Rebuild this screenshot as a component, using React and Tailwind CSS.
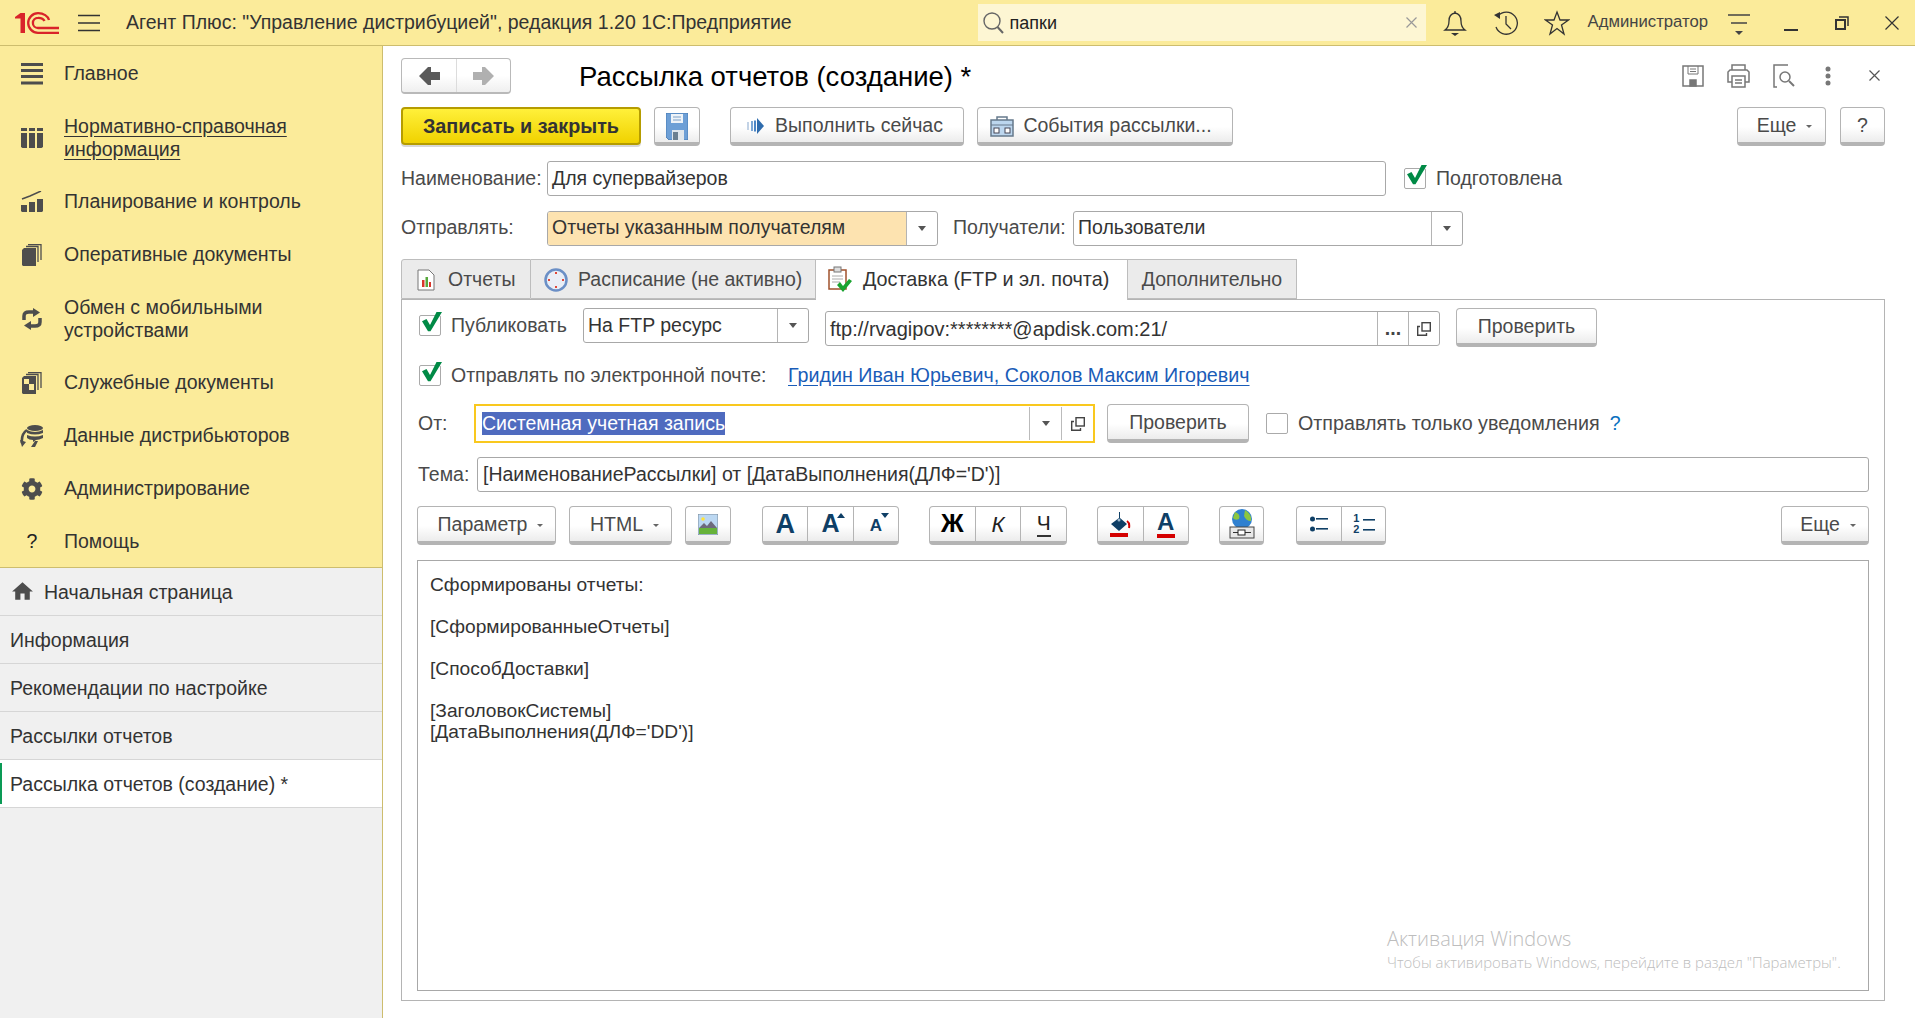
import React from "react";
import { MdHome } from "react-icons/md";
import { FaCog } from "react-icons/fa";

const font = "font-['Liberation_Sans',Arial,sans-serif]";

// ---- small drawn icons ----
const Logo = () => (
  <svg width="46" height="22" viewBox="0 0 46 22" fill="none" stroke="#d9232a" className="ml-[14px] shrink-0">
    <path d="M1 5L6.500 1H11V21H6.500V6.500H1Z" fill="#d9232a" stroke="none" />
    <path d="M35 8A11 8 0 0 0 24 1.200A9.800 9.800 0 0 0 24 20.800H45" strokeWidth="2.300" />
    <path d="M30.500 9A6.500 4.500 0 0 0 24 5.800A5 5 0 0 0 24 16H45" strokeWidth="2.300" />
  </svg>
);

const Burger = () => (
  <svg width="22" height="18" viewBox="0 0 22 18" stroke="#333" strokeWidth="1.3">
    <path d="M0 1.5H22M0 9H22M0 16.5H22" />
  </svg>
);

const SideIcon = ({ name }) => {
  const c = "#4d4d4d";
  if (name === "main")
    return (
      <svg width="22" height="22" viewBox="0 0 22 22" fill={c}>
        <rect y="0" width="22" height="3" /><rect y="6" width="22" height="3" /><rect y="12" width="22" height="3" /><rect y="18.5" width="22" height="3" />
      </svg>
    );
  if (name === "nsi")
    return (
      <svg width="22" height="22" viewBox="0 0 22 22" fill={c}>
        <path d="M0 1H6V4H0ZM8 1H14V4H8ZM16 1H22V4H16Z" />
        <path d="M0 6H6V21H1.500L0 20ZM8 6H14V21H8ZM16 6H22V20L20.500 21H16Z" />
      </svg>
    );
  if (name === "plan")
    return (
      <svg width="22" height="22" viewBox="0 0 22 22" fill={c}>
        <path d="M1 8L9 5L20 0" stroke={c} strokeWidth="1.500" fill="none" />
        <path d="M0 14H6V21H1L0 20ZM8 11H14V21H8ZM16 8H22V20L21 21H16Z" />
      </svg>
    );
  if (name === "docs")
    return (
      <svg width="20" height="22" viewBox="0 0 20 22" fill={c}>
        <path d="M0 6L2 4H14V22H1L0 21Z" />
        <path d="M4 2.500H16V18M6 .7H19V16" stroke={c} fill="none" strokeWidth="1.300" />
      </svg>
    );
  if (name === "sync")
    return (
      <svg width="22" height="22" viewBox="0 0 22 22" fill="none" stroke={c} strokeWidth="3.500">
        <path d="M3 12V8Q3 4 8 4H13" />
        <path d="M19 10V14Q19 18 14 18H9" />
        <path d="M12 0L19 4.500L12 9Z" fill={c} stroke="none" />
        <path d="M10 13L3 17.500L10 22Z" fill={c} stroke="none" />
      </svg>
    );
  if (name === "service")
    return (
      <svg width="20" height="22" viewBox="0 0 20 22" fill={c}>
        <path fillRule="evenodd" d="M0 6L2 4H14V22H1L0 21ZM2 7V12H7V7ZM7 12V18H12V12Z" />
        <path d="M4 2.500H16V18M6 .7H19V16" stroke={c} fill="none" strokeWidth="1.300" />
      </svg>
    );
  if (name === "data")
    return (
      <svg width="24" height="22" viewBox="0 0 24 22" fill={c}>
        <ellipse cx="15" cy="3" rx="8" ry="3" />
        <path d="M7 5Q15 9 23 5V8Q15 11 7 8ZM7 10Q15 13 23 10V13Q19 15 16 15L13 17V15Q9 15 7 13Z" />
        <path d="M7 5Q1 9 2 18" stroke={c} strokeWidth="2.600" fill="none" />
        <path d="M0 15L6 17L2 22ZM11 22L15 16H18L15 22Z" />
      </svg>
    );
  if (name === "admin") return <FaCog size={22} color={c} />;
  return <span className="text-[19.5px] text-[#222]">?</span>;
};

const LeftArrow = ({ color }) => (
  <svg width="21" height="18" viewBox="0 0 21 18" fill={color}><path d="M0 9L9 0H12V5H21V13H12V18H9Z" /></svg>
);
const RightArrow = ({ color }) => (
  <svg width="21" height="18" viewBox="0 0 21 18" fill={color}><path d="M21 9L12 0H9V5H0V13H9V18H12Z" /></svg>
);

const Floppy = () => (
  <svg width="22" height="27" viewBox="0 0 22 27">
    <path d="M0 0H22V27H3L0 24Z" fill="#6d9fd6" stroke="#3f74ad" strokeWidth=".8" />
    <rect x="5" y="1" width="12" height="9" fill="#eef3f8" />
    <path d="M7 4H15M7 7H15" stroke="#7aa0c8" />
    <rect x="6" y="17" width="12" height="10" fill="#dfe6ec" />
    <rect x="7" y="19" width="5" height="8" fill="#6a7f90" />
  </svg>
);

const RunIcon = () => (
  <svg width="17" height="16" viewBox="0 0 17 16">
    <path d="M1 4V12" stroke="#c3d3e6" strokeWidth="2" />
    <path d="M5 3V13" stroke="#7ba7d6" strokeWidth="2" />
    <path d="M8 2.500V13.500" stroke="#4d86c5" strokeWidth="2" />
    <path d="M10 0L17 8L10 16Z" fill="#2f6cad" />
  </svg>
);

const EventsIcon = () => (
  <svg width="24" height="21" viewBox="0 0 24 21">
    <path d="M1 4H23V20H1Z" fill="#bcd6ee" stroke="#66798c" strokeWidth="1.500" />
    <path d="M7 4V1H17V4" fill="none" stroke="#66798c" strokeWidth="1.500" />
    <path d="M1 9H23" stroke="#66798c" />
    <rect x="4" y="12" width="5" height="5" fill="#fff" stroke="#445" strokeWidth="1" />
    <rect x="15" y="12" width="5" height="5" fill="#fff" stroke="#445" strokeWidth="1" />
  </svg>
);

const OpenIcon = () => (
  <svg width="14" height="14" viewBox="0 0 14 14" fill="none" stroke="#444" strokeWidth="1.400">
    <rect x="5" y=".7" width="8.300" height="8.300" />
    <path d="M3 4.500H.7V13.300H9.500V11" />
  </svg>
);

const Caret = ({ size = "md" }) => (
  <span
    className={
      size === "sm"
        ? "inline-block border-x-[3px] border-t-[3px] border-x-transparent border-t-[#666]"
        : "inline-block border-x-[4px] border-t-[5px] border-x-transparent border-t-[#555]"
    }
  />
);

const Check = ({ on }) => (
  <span className="relative block w-[22px] h-[21px] shrink-0 border border-[#aaa] rounded-[2px] bg-white">
    {on && (
      <svg width="20" height="20" viewBox="0 0 20 20" className="absolute left-[2px] top-[-4px]">
        <path d="M0 9.300L4.500 7L8 13L14.500 0H20L8.500 19.300H6Z" fill="#008a46" />
      </svg>
    )}
  </span>
);

// ---- controls ----
const Btn = ({ className = "", seg = false, children }) => (
  <div
    className={
      "h-[39px] shrink-0 flex items-center justify-center border border-[#b4b4b4] border-b-[4px] rounded-[4px] bg-[linear-gradient(#ffffff_55%,#ececec)] text-[#4a4a4a] " +
      (seg ? "" : "pt-[2px] ") +
      className
    }
  >
    {children}
  </div>
);

const Box = ({ className = "", children }) => (
  <div className={"h-[35px] shrink-0 flex items-center border border-[#a8a8a8] rounded-[3px] bg-white text-[#333] " + className}>
    {children}
  </div>
);

const Seg = ({ className = "", children, line = true }) => (
  <div className={"h-full flex items-center justify-center shrink-0 " + (line ? "border-l border-[#b4b4b4] " : "") + className}>
    {children}
  </div>
);

// ---- data ----
const sections = [
  { icon: "main", text: ["Главное"] },
  { icon: "nsi", text: ["Нормативно-справочная", "информация"], link: true },
  { icon: "plan", text: ["Планирование и контроль"] },
  { icon: "docs", text: ["Оперативные документы"] },
  { icon: "sync", text: ["Обмен с мобильными", "устройствами"] },
  { icon: "service", text: ["Служебные документы"] },
  { icon: "data", text: ["Данные дистрибьюторов"] },
  { icon: "admin", text: ["Администрирование"] },
  { icon: "help", text: ["Помощь"] },
];

const openTabs = ["Информация", "Рекомендации по настройке", "Рассылки отчетов"];

export default function App() {
  return (
    <div className={font + " w-[1915px] h-[1018px] flex flex-col overflow-hidden bg-white text-[19.5px] text-[#333]"}>
      {/* Header */}
      <header className="h-[46px] shrink-0 flex items-center bg-[#fbeb9a] border-b border-[#cdbd6e]">
        <Logo />
        <div className="ml-[18px]"><Burger /></div>
        <div className="ml-[26px] text-[#333]">Агент Плюс: "Управление дистрибуцией", редакция 1.20 1С:Предприятие</div>

        <div className="ml-auto w-[448px] h-[37px] flex items-center bg-[#fdf6d3]">
          <svg width="24" height="24" viewBox="0 0 24 24" fill="none" stroke="#666" strokeWidth="1.400" className="ml-[3px]">
            <circle cx="11" cy="10" r="8" /><path d="M16.500 16L22 22" strokeWidth="2" />
          </svg>
          <span className="ml-[5px] mt-[1px] text-[18px] text-[#222]">папки</span>
          <svg width="11" height="11" viewBox="0 0 11 11" stroke="#999" strokeWidth="1.200" className="ml-auto mr-[9px]">
            <path d="M.5.5L10.500 10.500M10.500.5L.5 10.500" />
          </svg>
        </div>

        <svg width="24" height="26" viewBox="0 0 24 26" fill="none" stroke="#333" strokeWidth="1.300" className="ml-[17px]">
          <path d="M2 20Q6 17 6 11Q6 4 12 3Q18 4 18 11Q18 17 22 20Z" /><path d="M12 1V3" /><path d="M8 23H16L12 26Z" fill="#333" stroke="none" />
        </svg>
        <svg width="26" height="26" viewBox="0 0 26 26" fill="none" stroke="#333" strokeWidth="1.300" className="ml-[26px]">
          <path d="M5 6A11 11 0 1 1 3 17" /><path d="M13 6V14L18 19" /><path d="M1 5L7 2L7 9Z" fill="#333" stroke="none" />
        </svg>
        <svg width="26" height="26" viewBox="0 0 26 26" fill="none" stroke="#333" strokeWidth="1.300" className="ml-[25px]">
          <path d="M13 2L16 10H24.500L17.500 15L20 24L13 18.500L6 24L8.500 15L1.500 10H10Z" />
        </svg>
        <span className="ml-[18px] text-[16.7px] text-[#444] mb-[2px]">Администратор</span>
        <svg width="22" height="26" viewBox="0 0 22 26" stroke="#444" strokeWidth="1.300" className="ml-[20px]">
          <path d="M0 5H22M3 13H19" /><path d="M7 21H15L11 25Z" fill="#444" stroke="none" />
        </svg>
        <div className="ml-[34px] w-[14px] h-[2px] bg-[#333] mt-[14px]" />
        <svg width="14" height="14" viewBox="0 0 14 14" fill="none" stroke="#333" strokeWidth="1.500" className="ml-[37px]">
          <rect x="1" y="4" width="9" height="9" strokeWidth="2" /><path d="M4 1H13V10" />
        </svg>
        <svg width="14" height="14" viewBox="0 0 14 14" stroke="#333" strokeWidth="1.200" className="ml-[36px] mr-[16px]">
          <path d="M.5.5L13.500 13.500M13.500.5L.5 13.500" />
        </svg>
      </header>

      <div className="flex-1 flex min-h-0">
        {/* Left side: sections and open windows */}
        <aside className="w-[383px] shrink-0 flex flex-col bg-[#f0f0f0] border-r border-[#cdbd6e]">
          <nav className="h-[522px] pt-[1px] bg-[#fbeb9a] border-b border-[#cdbd6e]">
            {sections.map((s) => (
              <div key={s.icon} className={(s.text.length > 1 ? "h-[75px]" : "h-[53px]") + " flex items-center"}>
                <div className="w-[64px] pl-[20px] pr-[20px] flex justify-center shrink-0"><SideIcon name={s.icon} /></div>
                <div className={"leading-[23px] " + (s.link ? "underline underline-offset-[3px]" : "")}>
                  {s.text.map((t) => <div key={t}>{t}</div>)}
                </div>
              </div>
            ))}
          </nav>
          <div className="h-[48px] flex items-center pl-[10px] border-b border-[#d6d6d6]">
            <MdHome size={25} color="#4d4d4d" />
            <span className="ml-[9px] pt-[2px]">Начальная страница</span>
          </div>
          {openTabs.map((t) => (
            <div key={t} className="h-[48px] flex items-center pl-[10px] pt-[2px] border-b border-[#d6d6d6]">{t}</div>
          ))}
          <div className="h-[48px] flex items-center bg-white border-b border-[#d6d6d6]">
            <div className="w-[2px] h-[41px] bg-[#0a9a55]" />
            <span className="ml-[8px] pt-[2px]">Рассылка отчетов (создание) *</span>
          </div>
        </aside>

        {/* Form */}
        <main className="flex-1 min-w-0 pl-[18px] pr-[30px] flex flex-col">
          {/* Title row */}
          <div className="h-[36px] mt-[12px] flex items-center shrink-0">
            <div className="w-[110px] h-[36px] flex items-center border border-[#b9b9b9] border-b-[2px] rounded-[4px] bg-[linear-gradient(#ffffff_50%,#efefef)]">
              <div className="w-[55px] h-full flex items-center justify-center border-r border-[#dcdcdc]"><LeftArrow color="#5a5a5a" /></div>
              <div className="flex-1 flex justify-center"><RightArrow color="#b0b0b0" /></div>
            </div>
            <h1 className="ml-[68px] pt-[1px] text-[27.5px] font-normal text-black">Рассылка отчетов (создание) *</h1>
            <div className="ml-auto flex items-center text-[#777]">
              <svg width="22" height="22" viewBox="0 0 22 22" fill="none" stroke="#777" strokeWidth="1.500">
                <path d="M1 1H21V21H1Z" /><path d="M6 1V9H16V1M8 4H14M8 6.500H14" strokeWidth="1" /><rect x="8" y="15" width="6" height="6" fill="#777" />
              </svg>
              <svg width="25" height="24" viewBox="0 0 25 24" fill="none" stroke="#777" strokeWidth="1.500" className="ml-[22px]">
                <path d="M6 6V1H19V6M6 18H2V8L4 6H21L23 8V18H19" /><path d="M6 12H19V23H6Z" /><path d="M9 16H16M9 19H16" />
              </svg>
              <svg width="22" height="24" viewBox="0 0 22 24" fill="none" stroke="#777" strokeWidth="1.500" className="ml-[22px]">
                <path d="M15 1H1V23H4" /><circle cx="12" cy="13" r="5" /><path d="M16 17L21 22" strokeWidth="2" />
              </svg>
              <svg width="6" height="20" viewBox="0 0 6 20" fill="#777" className="ml-[30px]">
                <circle cx="3" cy="3" r="2.500" /><circle cx="3" cy="10" r="2.500" /><circle cx="3" cy="17" r="2.500" />
              </svg>
              <svg width="11" height="11" viewBox="0 0 11 11" stroke="#555" strokeWidth="1.200" className="ml-[38px] mr-[5px] mb-[2px]">
                <path d="M.5.5L10.500 10.500M10.500.5L.5 10.500" />
              </svg>
            </div>
          </div>

          {/* Command bar */}
          <div className="h-[39px] mt-[13px] flex shrink-0">
            <div className="w-[240px] h-[38px] pt-[1px] flex items-center justify-center border-2 border-[#b59c00] rounded-[4px] bg-[linear-gradient(#fff03a,#f0d200)] font-bold text-[19.8px] text-[#333] shadow-[0_2px_0_#d8d8d8]">
              Записать и закрыть
            </div>
            <Btn className="ml-[13px] w-[46px]"><Floppy /></Btn>
            <Btn className="ml-[30px] w-[234px]"><RunIcon /><span className="ml-[11px] mr-[4px]">Выполнить сейчас</span></Btn>
            <Btn className="ml-[13px] w-[256px]"><EventsIcon /><span className="ml-[9px] mr-[8px]">События рассылки...</span></Btn>
            <Btn className="ml-auto w-[89px]"><span className="ml-[6px]">Еще</span><span className="ml-[10px] flex"><Caret size="sm" /></span></Btn>
            <Btn className="ml-[14px] w-[45px]">?</Btn>
          </div>

          {/* Name */}
          <div className="h-[35px] mt-[15px] flex items-center shrink-0">
            <span className="w-[146px] text-[#4a4a4a]">Наименование:</span>
            <Box className="w-[839px] pl-[4px]"><span className="pt-[1px]">Для супервайзеров</span></Box>
            <span className="ml-[18px]"><Check on /></span>
            <span className="ml-[10px] text-[#4a4a4a]">Подготовлена</span>
          </div>

          {/* Send to */}
          <div className="h-[34px] mt-[15px] flex items-center shrink-0">
            <span className="w-[146px] text-[#4a4a4a]">Отправлять:</span>
            <Box className="w-[391px] h-[34px] overflow-hidden">
              <div className="flex-1 h-full flex items-center pl-[4px] bg-[#fde3b0]">Отчеты указанным получателям</div>
              <Seg className="w-[31px] border-[#a8a8a8]"><Caret /></Seg>
            </Box>
            <span className="ml-[15px] w-[120px] text-[#4a4a4a]">Получатели:</span>
            <Box className="w-[390px] h-[34px]">
              <div className="flex-1 pl-[4px]">Пользователи</div>
              <Seg className="w-[31px] border-[#a8a8a8]"><Caret /></Seg>
            </Box>
          </div>

          {/* Tabs */}
          <div className="h-[41px] mt-[14px] -mb-px flex shrink-0 relative z-10">
            <div className="w-[130px] h-[40px] pt-[1px] flex items-center bg-[#ebebeb] border border-[#bdbdbd] rounded-tl-[3px] text-[#4a4a4a]">
              <svg width="18" height="22" viewBox="0 0 18 22" className="ml-[15px]">
                <path d="M1 1H12L17 6V21H1Z" fill="#fff" stroke="#777" />
                <rect x="5" y="11" width="2.500" height="7" fill="#d9362c" /><rect x="8.500" y="8" width="2.500" height="10" fill="#58a83d" /><rect x="12" y="13" width="2" height="5" fill="#d9362c" />
              </svg>
              <span className="ml-[13px]">Отчеты</span>
            </div>
            <div className="w-[285px] h-[40px] pt-[1px] flex items-center bg-[#ebebeb] border-y border-r border-[#bdbdbd] text-[#4a4a4a]">
              <svg width="24" height="24" viewBox="0 0 24 24" className="ml-[13px]">
                <circle cx="12" cy="12" r="10.500" fill="#e9eef6" stroke="#6b8fc6" strokeWidth="2.500" />
                <path d="M12 4V6M12 18V20M4 12H6M18 12H20" stroke="#e0473a" strokeWidth="2" />
              </svg>
              <span className="ml-[10px]">Расписание (не активно)</span>
            </div>
            <div className="w-[312px] h-[41px] pb-[1px] flex items-center bg-white border-t border-r border-[#bdbdbd] text-[#333]">
              <svg width="24" height="27" viewBox="0 0 24 27" className="ml-[12px]">
                <path d="M1 4H18V23H1Z" fill="#fff" stroke="#a0522d" strokeWidth="1.500" />
                <rect x="6" y="1" width="7" height="5" fill="#ddd" stroke="#777" />
                <path d="M4 10H15M4 13H15M4 16H12" stroke="#aaa" />
                <path d="M9 19L12 16L15 20L21 13L24 15L15 26Z" fill="#1aa32f" />
              </svg>
              <span className="ml-[11px] text-[19.8px]">Доставка (FTP и эл. почта)</span>
            </div>
            <div className="w-[169px] h-[40px] pt-[1px] flex items-center justify-center bg-[#ebebeb] border-y border-r border-[#bdbdbd] text-[#4a4a4a]">Дополнительно</div>
          </div>

          {/* Panel */}
          <section className="h-[702px] shrink-0 flex flex-col px-[15px] pb-[9px] border border-[#b4b4b4]">
            {/* Publish */}
            <div className="h-[39px] mt-[8px] flex items-start shrink-0">
              <span className="ml-[2px] mt-[7px]"><Check on /></span>
              <span className="ml-[10px] h-[36px] w-[132px] flex items-center text-[#4a4a4a]">Публиковать</span>
              <Box className="w-[226px]">
                <div className="flex-1 pl-[4px]">На FTP ресурс</div>
                <Seg className="w-[31px] border-[#a8a8a8]"><Caret /></Seg>
              </Box>
              <Box className="ml-[16px] mt-[3px] w-[615px]">
                <div className="flex-1 pl-[4px] text-[20px]">ftp://rvagipov:********@apdisk.com:21/</div>
                <Seg className="w-[31px] border-[#a8a8a8]"><span className="font-bold text-[#444] leading-none">...</span></Seg>
                <Seg className="w-[31px] border-[#a8a8a8]"><OpenIcon /></Seg>
              </Box>
              <Btn className="ml-[16px] w-[141px]">Проверить</Btn>
            </div>

            {/* Mail */}
            <div className="h-[24px] mt-[16px] flex items-center shrink-0">
              <span className="ml-[2px]"><Check on /></span>
              <span className="ml-[10px] pt-[1px] w-[337px] text-[#4a4a4a]">Отправлять по электронной почте:</span>
              <a className="pt-[2px] text-[19.7px] text-[#1a5cb8] underline underline-offset-[3px]">Гридин Иван Юрьевич, Соколов Максим Игоревич</a>
            </div>

            {/* From */}
            <div className="h-[39px] mt-[17px] flex items-center shrink-0">
              <span className="ml-[1px] w-[56px] text-[#4a4a4a]">От:</span>
              <div className="w-[621px] h-[39px] shrink-0 flex items-center border-2 border-[#f9c81e]">
                <div className="flex-1 pl-[6px]">
                  <span className="inline-block h-[23px] mt-[1px] leading-[23px] bg-[#4f6bbf] text-white">Системная учетная запись</span>
                </div>
                <div className="w-[32px] h-[33px] flex items-center justify-center border-l border-[#bbb]"><Caret /></div>
                <div className="w-[32px] h-[33px] flex items-center justify-center border-l border-[#bbb]"><OpenIcon /></div>
              </div>
              <Btn className="ml-[12px] w-[142px]">Проверить</Btn>
              <span className="ml-[17px]"><Check /></span>
              <span className="ml-[10px] text-[19.7px] text-[#4a4a4a]">Отправлять только уведомления</span>
              <span className="ml-[10px] text-[#0a70c0]">?</span>
            </div>

            {/* Subject */}
            <div className="h-[35px] mt-[14px] flex items-center shrink-0">
              <span className="ml-[1px] w-[59px] text-[#4a4a4a]">Тема:</span>
              <Box className="flex-1 shrink pl-[5px]"><span className="pt-[1px]">[НаименованиеРассылки] от [ДатаВыполнения(ДЛФ='D')]</span></Box>
            </div>

            {/* Editor toolbar */}
            <div className="h-[39px] mt-[14px] flex shrink-0">
              <Btn className="w-[139px]"><span className="ml-[8px]">Параметр</span><span className="ml-[10px] flex"><Caret size="sm" /></span></Btn>
              <Btn className="ml-[13px] w-[103px]"><span className="ml-[8px]">HTML</span><span className="ml-[10px] flex"><Caret size="sm" /></span></Btn>
              <Btn seg className="ml-[13px] w-[46px]">
                <svg width="20" height="21" viewBox="0 0 20 21">
                  <rect width="20" height="21" fill="#bcd8f2" stroke="#7b8a99" />
                  <circle cx="5" cy="5" r="1.800" fill="#ffe23a" />
                  <path d="M1 14L6 9L9 12L13 7L19 14Z" fill="#6d6a7c" />
                  <rect x="1" y="14" width="18" height="6" fill="#66b23a" />
                </svg>
              </Btn>
              <Btn seg className="ml-[31px] w-[137px]">
                <Seg line={false} className="flex-1 text-[27px] font-bold text-[#0f3f66]">A</Seg>
                <Seg className="flex-1 relative">
                  <span className="text-[25px] font-bold text-[#0f3f66]">A</span>
                  <span className="absolute top-[6px] right-[8px] border-x-[4px] border-b-[5px] border-x-transparent border-b-[#0f3f66]" />
                </Seg>
                <Seg className="flex-1 relative">
                  <span className="text-[17px] font-bold text-[#0f3f66] mt-[4px]">A</span>
                  <span className="absolute top-[6px] right-[9px] border-x-[4px] border-t-[5px] border-x-transparent border-t-[#0f3f66]" />
                </Seg>
              </Btn>
              <Btn seg className="ml-[30px] w-[138px]">
                <Seg line={false} className="flex-1 text-[25px] font-bold text-black">Ж</Seg>
                <Seg className="flex-1 text-[22px] italic text-[#222]">К</Seg>
                <Seg className="flex-1"><span className="text-[21px] text-[#222] border-b-2 border-[#333] leading-[24px]">Ч</span></Seg>
              </Btn>
              <Btn seg className="ml-[30px] w-[92px]">
                <Seg line={false} className="flex-1">
                  <svg width="22" height="26" viewBox="0 0 22 26">
                    <path d="M10 1V7L2 13L10 20L18 13L11 7V1Z" fill="#0f3f66" />
                    <circle cx="10" cy="9" r="1.500" fill="#9db7cc" />
                    <path d="M18 10Q21 12 20 17" stroke="#d40000" strokeWidth="2" fill="none" />
                    <rect x="1" y="22" width="18" height="4" fill="#d40000" />
                  </svg>
                </Seg>
                <Seg className="flex-1">
                  <div className="flex flex-col items-center leading-none">
                    <span className="text-[24px] font-bold text-[#0f3f66] h-[22px] leading-[22px]">A</span>
                    <span className="w-[18px] h-[4px] bg-[#d40000] mt-[1px]" />
                  </div>
                </Seg>
              </Btn>
              <Btn seg className="ml-[30px] w-[45px]">
                <svg width="26" height="30" viewBox="0 0 26 30">
                  <circle cx="13" cy="10" r="10" fill="#2f80d0" />
                  <path d="M6 3Q12 5 10 10Q6 12 4 9ZM16 1Q23 5 22 12Q17 12 15 7Z" fill="#8cc63f" />
                  <rect x="1" y="18" width="24" height="11" fill="#e8e8e8" stroke="#444" />
                  <path d="M4 23.500H22" stroke="#333" strokeWidth="1" />
                  <rect x="9" y="21" width="7" height="5" fill="#fff" stroke="#222" />
                </svg>
              </Btn>
              <Btn seg className="ml-[32px] w-[90px]">
                <Seg line={false} className="flex-1">
                  <svg width="18" height="16" viewBox="0 0 18 16" fill="#0f3f66">
                    <circle cx="2.500" cy="3" r="2.500" /><circle cx="2.500" cy="13" r="2.500" /><rect x="6" y="2" width="12" height="1.600" /><rect x="6" y="12" width="12" height="1.600" />
                  </svg>
                </Seg>
                <Seg className="flex-1 relative">
                  <div className="flex flex-col text-[11px] font-bold leading-[11px] text-[#0f3f66] mr-[14px]"><span>1</span><span>2</span></div>
                  <svg width="12" height="16" viewBox="0 0 12 16" fill="#0f3f66" className="absolute left-[21px] top-[10px]">
                    <rect y="2" width="12" height="1.600" /><rect y="12" width="12" height="1.600" />
                  </svg>
                </Seg>
              </Btn>
              <Btn className="ml-auto w-[88px]"><span className="ml-[6px]">Еще</span><span className="ml-[10px] flex"><Caret size="sm" /></span></Btn>
            </div>

            {/* Text */}
            <div className="relative flex-1 mt-[15px] pt-[13px] pl-[12px] border border-[#a8a8a8] text-[19.2px] leading-[21px] text-[#333]">
              <div>Сформированы отчеты:</div>
              <div className="mt-[21px]">[СформированныеОтчеты]</div>
              <div className="mt-[21px]">[СпособДоставки]</div>
              <div className="mt-[21px]">[ЗаголовокСистемы]</div>
              <div>[ДатаВыполнения(ДЛФ='DD')]</div>
              <div className="absolute left-[969px] top-[364px] font-['Open_Sans',sans-serif] font-light text-[#bdbdbd]">
                <div className="text-[19.9px] leading-[27px]">Активация Windows</div>
                <div className="text-[14.9px] leading-[20px]">Чтобы активировать Windows, перейдите в раздел "Параметры".</div>
              </div>
            </div>
          </section>
        </main>
      </div>
    </div>
  );
}
